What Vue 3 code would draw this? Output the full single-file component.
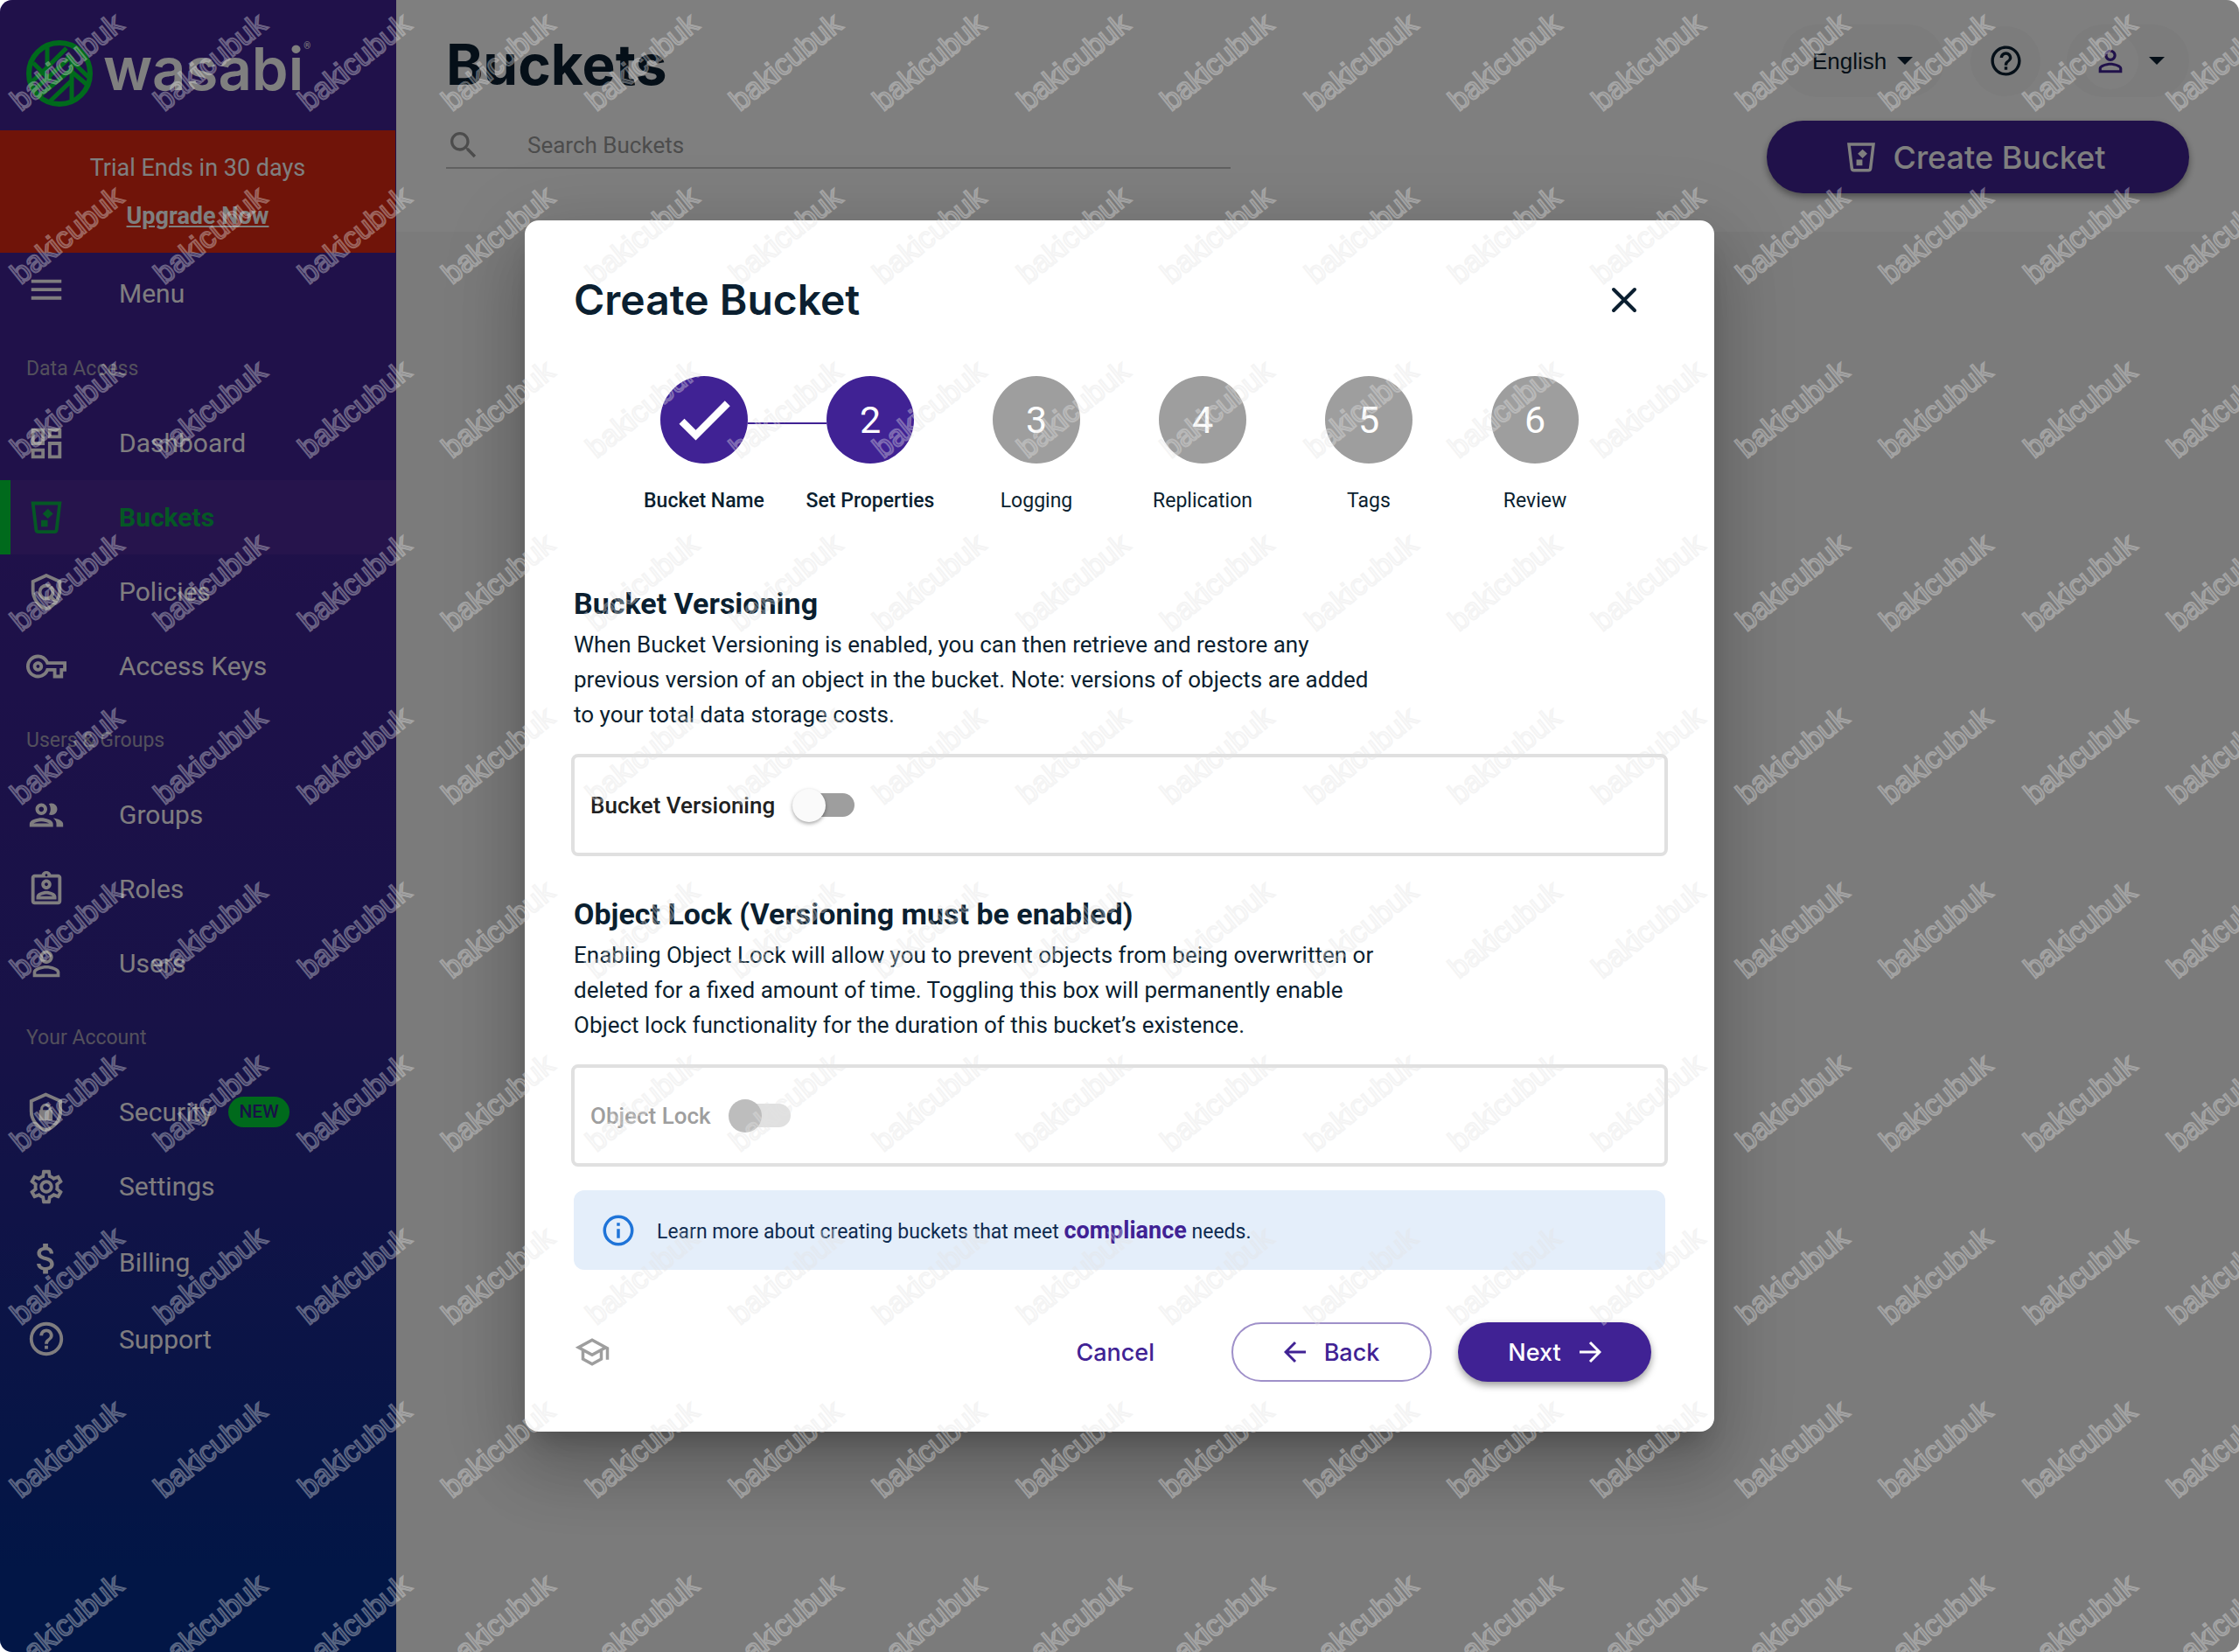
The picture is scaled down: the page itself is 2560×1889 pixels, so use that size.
<template>
  <div class="page">
    <aside class="sidebar">
      <a class="logo" href="#" aria-label="wasabi">
        <svg class="logo-mark" viewBox="0 0 76 76" fill="none" stroke="currentColor">
          <circle cx="38" cy="38" r="35" stroke-width="6" />
          <path
            d="M24 7v26M24 31L46 9M8 26l20 20M24 31l-17 16M10 56l42-38M52 20v50M46 18l25 24M52 36l20 17M52 46L27 70M52 33L16 63"
            stroke-width="5"
          />
        </svg>
        <span class="logo-text">wasabi</span>
        <span class="logo-reg">®</span>
      </a>

      <div class="trial">
        <span>Trial Ends in 30 days</span>
        <a href="#">Upgrade Now</a>
      </div>

      <nav>
        <template v-for="item in menu" :key="item.label">
          <h2 v-if="item.heading" class="nav-heading">{{ item.label }}</h2>
          <a v-else href="#" class="nav-item" :class="{ active: item.active, tall: item.tall }">
            <svg class="nav-icon" :viewBox="item.raised ? '0 2 24 24' : '0 0 24 24'">
              <path v-if="item.icon" :d="icons[item.icon]" />
              <path v-if="item.line" class="line" :d="lines[item.line]" />
            </svg>
            <span>{{ item.label }}</span>
            <span v-if="item.badge" class="badge">{{ item.badge }}</span>
          </a>
        </template>
      </nav>
    </aside>

    <main class="content">
      <header class="header">
        <div class="header-left">
          <h1>Buckets</h1>
          <label class="search">
            <svg viewBox="0 0 24 24"><path :d="icons.search" /></svg>
            <input type="text" placeholder="Search Buckets" aria-label="Search Buckets" />
          </label>
        </div>
        <div class="header-right">
          <div class="tools">
            <label class="language">
              <select v-model="language" aria-label="Language">
                <option>English</option>
              </select>
              <svg class="caret" viewBox="0 0 18 9"><path d="M0 0h18L9 9z" /></svg>
            </label>
            <button class="help" aria-label="Help">
              <svg viewBox="0 0 24 24"><path :d="icons.help" /></svg>
            </button>
            <button class="user" aria-label="Account">
              <span class="avatar">
                <svg viewBox="0 0 24 24"><path :d="icons.user" /></svg>
              </span>
              <svg class="caret" viewBox="0 0 18 9"><path d="M0 0h18L9 9z" /></svg>
            </button>
          </div>
          <button class="create">
            <svg viewBox="0 0 24 24">
              <path :d="icons.bucket" />
              <path class="line" :d="lines.bucket" />
            </svg>
            Create Bucket
          </button>
        </div>
      </header>
    </main>

    <div class="backdrop">
      <section class="modal" role="dialog" aria-labelledby="modal-title">
        <div class="modal-header">
          <h2 id="modal-title">Create Bucket</h2>
          <button class="close" aria-label="Close">
            <svg viewBox="0 0 30 30"><path d="M3 3l24 24M27 3L3 27" /></svg>
          </button>
        </div>

        <ol class="steps">
          <li v-for="(step, i) in steps" :key="step" :class="{ reached: i < 2, done: i < 1 }">
            <span class="circle">
              <svg v-if="i < 1" viewBox="0 0 24 24"><path :d="icons.check" /></svg>
              <template v-else>{{ i + 1 }}</template>
            </span>
            <span class="step-label">{{ step }}</span>
          </li>
        </ol>

        <div class="option">
          <h3>Bucket Versioning</h3>
          <p>
            When Bucket Versioning is enabled, you can then retrieve and restore any previous version
            of an object in the bucket. Note: versions of objects are added to your total data
            storage costs.
          </p>
          <div class="option-box">
            <label for="versioning">Bucket Versioning</label>
            <input id="versioning" v-model="versioning" type="checkbox" />
          </div>
        </div>

        <div class="option">
          <h3>Object Lock (Versioning must be enabled)</h3>
          <p>
            Enabling Object Lock will allow you to prevent objects from being overwritten or deleted
            for a fixed amount of time. Toggling this box will permanently enable Object lock
            functionality for the duration of this bucket’s existence.
          </p>
          <div class="option-box disabled">
            <label for="lock">Object Lock</label>
            <input id="lock" v-model="objectLock" type="checkbox" :disabled="!versioning" />
          </div>
        </div>

        <div class="info">
          <svg viewBox="0 0 24 24"><path :d="icons.info" /></svg>
          <span>
            Learn more about creating buckets that meet <a href="#">compliance</a> needs.
          </span>
        </div>

        <div class="modal-footer">
          <svg class="school" viewBox="0 0 24 24"><path :d="icons.school" /></svg>
          <button class="cancel">Cancel</button>
          <button class="back">
            <svg viewBox="0 0 26 26"><path d="M25 13H2M13 2L2 13l11 11" /></svg>
            Back
          </button>
          <button class="next">
            Next
            <svg viewBox="0 0 26 26"><path d="M1 13h23M13 2l11 11-11 11" /></svg>
          </button>
        </div>
      </section>
    </div>

    <svg class="watermark" aria-hidden="true">
      <text v-for="(m, i) in marks" :key="i" :transform="`translate(${m.x} ${m.y}) rotate(-39)`">
        bakicubuk
      </text>
    </svg>
  </div>
</template>

<script setup>
import { ref } from 'vue'

const language = ref('English')
const versioning = ref(false)
const objectLock = ref(false)

const steps = ['Bucket Name', 'Set Properties', 'Logging', 'Replication', 'Tags', 'Review']

const menu = [
  { label: 'Menu', icon: 'menu', tall: true, raised: true },
  { label: 'Data Access', heading: true },
  { label: 'Dashboard', icon: 'dashboard' },
  { label: 'Buckets', icon: 'bucket', line: 'bucket', active: true },
  { label: 'Policies', line: 'policy' },
  { label: 'Access Keys', icon: 'key' },
  { label: 'Users & Groups', heading: true },
  { label: 'Groups', icon: 'groups' },
  { label: 'Roles', icon: 'roles' },
  { label: 'Users', icon: 'user' },
  { label: 'Your Account', heading: true },
  { label: 'Security', icon: 'lock', line: 'shield', badge: 'NEW' },
  { label: 'Settings', icon: 'settings' },
  { label: 'Billing', icon: 'money', tall: true, raised: true },
  { label: 'Support', icon: 'help', tall: true }
]

// stroked shapes
const lines = {
  bucket: 'M4 3.4h16l-1.9 15.7a1.4 1.4 0 0 1-1.4 1.3H7.3a1.4 1.4 0 0 1-1.4-1.3z',
  policy:
    'M12 2.1L4 5.7V11c0 5 3.4 9.6 8 10.9 4.6-1.3 8-5.9 8-10.9V5.700z M15.900 12a3.900 3.900 0 1 1-7.800 0a3.900 3.900 0 1 1 7.800 0 M14.700 14.800l3.600 3.600',
  shield: 'M11.700 1.300L3 5.200v6c0 5.300 3.700 9.900 8.700 11.300 5-1.400 8.700-6 8.700-11.300v-6z'
}

// filled shapes
const icons = {
  menu: 'M3 18h18v-2H3v2zm0-5h18v-2H3v2zm0-7v2h18V6H3z',
  dashboard:
    'M19 5v2h-4V5h4M9 5v6H5V5h4m10 8v6h-4v-6h4M9 17v2H5v-2h4M21 3h-8v6h8V3zM11 3H3v10h8V3zm10 8h-8v10h8V11zm-10 4H3v6h8v-6z',
  bucket: 'M12.900 6.700l3.100 2.900-3.100 2.900-3.100-2.900zM8.900 13.400h3.900v3.900H8.900z',
  key: 'M22 19h-6v-4h-2.680c-1.140 2.420-3.600 4-6.320 4-3.860 0-7-3.140-7-7s3.140-7 7-7c2.720 0 5.170 1.580 6.320 4H24v6h-2v4zm-4-2h2v-4h2v-2H11.940l-.23-.67C11.010 8.340 9.110 7 7 7c-2.760 0-5 2.240-5 5s2.240 5 5 5c2.110 0 4.010-1.340 4.710-3.330l.23-.67H18v4zM7 15c-1.650 0-3-1.350-3-3s1.350-3 3-3 3 1.350 3 3-1.350 3-3 3zm0-4c-.55 0-1 .45-1 1s.45 1 1 1 1-.45 1-1-.45-1-1-1z',
  groups:
    'M9 13.750c-2.340 0-7 1.170-7 3.500V19h14v-1.750c0-2.330-4.660-3.500-7-3.500zM4.340 17c.84-.58 2.870-1.250 4.660-1.250s3.820.67 4.660 1.250H4.340zM9 12c1.930 0 3.500-1.570 3.500-3.500S10.930 5 9 5 5.500 6.570 5.500 8.500 7.070 12 9 12zm0-5c.83 0 1.500.67 1.500 1.500S9.830 10 9 10s-1.500-.67-1.500-1.500S8.170 7 9 7zm7.040 6.810c1.160.84 1.960 1.960 1.960 3.440V19h4v-1.750c0-2.020-3.500-3.170-5.960-3.440zM15 12c1.930 0 3.500-1.570 3.500-3.500S16.930 5 15 5c-.54 0-1.040.13-1.500.35.63.89 1 1.980 1 3.150s-.37 2.260-1 3.150c.46.22.96.35 1.500.35z',
  roles:
    'M19 3h-4.180C14.400 1.840 13.300 1 12 1s-2.400.84-2.820 2H5c-1.100 0-2 .9-2 2v14c0 1.100.9 2 2 2h14c1.100 0 2-.9 2-2V5c0-1.100-.9-2-2-2zm-7-.25c.41 0 .75.34.75.75s-.34.75-.75.75-.75-.34-.75-.75.34-.75.75-.75zM19 19H5V5h14v14zM12 6c-1.650 0-3 1.350-3 3s1.350 3 3 3 3-1.350 3-3-1.350-3-3-3zm0 4c-.55 0-1-.45-1-1s.45-1 1-1 1 .45 1 1-.45 1-1 1zm-6 6.470V18h12v-1.530c0-2.500-3.970-3.580-6-3.580s-6 1.070-6 3.580zM8.310 16c.69-.56 2.380-1.120 3.690-1.120s3.010.56 3.690 1.120H8.310z',
  user: 'M12 5.900c1.160 0 2.100.94 2.100 2.100s-.94 2.100-2.100 2.100S9.900 9.160 9.900 8s.94-2.100 2.100-2.100m0 9c2.970 0 6.100 1.460 6.100 2.100v1.100H5.900V17c0-.64 3.130-2.100 6.100-2.100M12 4C9.790 4 8 5.790 8 8s1.790 4 4 4 4-1.790 4-4-1.790-4-4-4zm0 9c-2.670 0-8 1.340-8 4v3h16v-3c0-2.660-5.330-4-8-4z',
  lock: 'M15 10.500V10a3.300 3.300 0 0 0-6.600 0v.5H7.700v6.300h8v-6.300zm-5-.5a1.700 1.700 0 0 1 3.400 0v.5H10z',
  settings:
    'M19.430 12.980c.04-.32.07-.64.07-.98 0-.34-.03-.66-.07-.98l2.110-1.650c.19-.15.24-.42.12-.64l-2-3.460c-.09-.16-.26-.25-.44-.25-.06 0-.12.01-.17.03l-2.490 1c-.52-.4-1.080-.73-1.690-.98l-.38-2.650C14.460 2.180 14.250 2 14 2h-4c-.25 0-.46.18-.49.42l-.38 2.650c-.61.25-1.170.59-1.690.98l-2.490-1c-.06-.02-.12-.03-.18-.03-.17 0-.34.09-.43.25l-2 3.460c-.13.22-.07.49.12.64l2.110 1.650c-.04.32-.07.65-.07.98 0 .33.03.66.07.98l-2.110 1.650c-.19.15-.24.42-.12.64l2 3.460c.09.16.26.25.44.25.06 0 .12-.01.17-.03l2.490-1c.52.4 1.080.73 1.690.98l.38 2.650c.03.24.24.42.49.42h4c.25 0 .46-.18.49-.42l.38-2.650c.61-.25 1.170-.59 1.690-.98l2.490 1c.06.02.12.03.18.03.17 0 .34-.09.43-.25l2-3.460c.12-.22.07-.49-.12-.64l-2.110-1.650zm-1.980-1.710c.04.31.05.52.05.73 0 .21-.02.43-.05.73l-.14 1.130.89.7 1.080.84-.7 1.210-1.270-.51-1.040-.42-.9.68c-.43.32-.84.56-1.250.73l-1.060.43-.16 1.130-.2 1.350h-1.400l-.19-1.350-.16-1.130-1.060-.43c-.43-.18-.83-.41-1.230-.71l-.91-.7-1.060.43-1.270.51-.7-1.210 1.080-.84.89-.7-.14-1.130c-.03-.31-.05-.54-.05-.74s.02-.43.05-.73l.14-1.130-.89-.7-1.080-.84.7-1.210 1.270.51 1.040.42.9-.68c.43-.32.84-.56 1.250-.73l1.060-.43.16-1.130.2-1.350h1.390l.19 1.350.16 1.130 1.060.43c.43.18.83.41 1.230.71l.91.7 1.060-.43 1.270-.51.7 1.210-1.070.85-.89.7.14 1.130zM12 8c-2.210 0-4 1.790-4 4s1.790 4 4 4 4-1.790 4-4-1.790-4-4-4zm0 6c-1.100 0-2-.9-2-2s.9-2 2-2 2 .9 2 2-.9 2-2 2z',
  money:
    'M11.800 10.900c-2.270-.59-3-1.200-3-2.150 0-1.090 1.010-1.850 2.700-1.850 1.780 0 2.440.85 2.500 2.100h2.210c-.07-1.720-1.120-3.300-3.210-3.810V3h-3v2.160c-1.940.42-3.500 1.680-3.500 3.610 0 2.310 1.910 3.460 4.700 4.130 2.500.6 3 1.480 3 2.410 0 .69-.49 1.790-2.700 1.790-2.060 0-2.870-.92-2.980-2.100h-2.200c.12 2.190 1.760 3.420 3.680 3.830V21h3v-2.150c1.950-.37 3.500-1.500 3.500-3.550 0-2.840-2.430-3.810-4.700-4.400z',
  help: 'M11 18h2v-2h-2v2zm1-16C6.480 2 2 6.480 2 12s4.480 10 10 10 10-4.480 10-10S17.520 2 12 2zm0 18c-4.410 0-8-3.590-8-8s3.590-8 8-8 8 3.590 8 8-3.590 8-8 8zm0-14c-2.210 0-4 1.790-4 4h2c0-1.100.9-2 2-2s2 .9 2 2c0 2-3 1.750-3 5h2c0-2.250 3-2.500 3-5 0-2.210-1.790-4-4-4z',
  search:
    'M15.500 14h-.79l-.28-.27C15.410 12.590 16 11.110 16 9.500 16 5.910 13.090 3 9.500 3S3 5.910 3 9.500 5.910 16 9.500 16c1.610 0 3.090-.59 4.230-1.570l.27.28v.79l5 4.990L20.490 19l-4.990-5zm-6 0C7.010 14 5 11.990 5 9.500S7.010 5 9.500 5 14 7.010 14 9.500 11.990 14 9.500 14z',
  check: 'M9 15.700L4.900 11.600l-1.900 1.900L9 19.400 21.400 7l-1.900-1.900z',
  info: 'M11 9h2V7h-2M12 20c-4.410 0-8-3.590-8-8s3.590-8 8-8 8 3.590 8 8-3.590 8-8 8m0-18A10 10 0 0 0 2 12a10 10 0 0 0 10 10 10 10 0 0 0 10-10A10 10 0 0 0 12 2m-1 15h2v-6h-2v6z',
  school:
    'M12 3L1 9l4 2.180v6L12 21l7-3.820v-6l2-1.090V17h2V9L12 3zm6.820 6L12 12.720 5.180 9 12 5.280 18.820 9zM17 15.990l-5 2.730-5-2.730v-3.720L12 15l5-2.730v3.720z'
}

// diagonal marks repeated over the whole page
const marks = []
for (let row = 0; row < 10; row++) {
  for (let col = 0; col < 16; col++) {
    marks.push({ x: Math.round(24 + col * 164.4), y: Math.round(128 + row * 198.3) })
  }
}
</script>

<style>
html,
body {
  margin: 0;
  background: #ffffff;
}
</style>

<style scoped>
* {
  box-sizing: border-box;
}

.page {
  position: relative;
  display: flex;
  min-height: 100vh;
  overflow: hidden;
  border-radius: 14px;
  font-family: Roboto, 'Liberation Sans', sans-serif;
  color: #0b1f30;
}

h1,
h2,
h3,
p,
ol {
  margin: 0;
  padding: 0;
}

button {
  border: none;
  background: none;
  padding: 0;
  font-family: Inter, sans-serif;
  cursor: pointer;
}

svg {
  flex: none;
  fill: currentColor;
}

.line {
  fill: none;
  stroke: currentColor;
  stroke-width: 2;
}

/* sidebar */
.sidebar {
  flex: none;
  width: 453px;
  color: #ffffff;
  background: linear-gradient(#402294 0%, #402294 30%, #30248f 62%, #042c8c 95%);
}

.logo {
  display: flex;
  align-items: center;
  height: 149px;
  padding: 18px 0 0 30px;
  color: #ffffff;
  text-decoration: none;
}

.logo-mark {
  width: 76px;
  height: 76px;
  fill: none;
  color: #00d438;
}

.logo-text {
  margin: -10px 0 0 12px;
  font-family: Inter, sans-serif;
  font-size: 67px;
  font-weight: 600;
  line-height: 76px;
}

.logo-reg {
  align-self: flex-start;
  margin-top: 29px;
  font-size: 10px;
}

.trial {
  display: flex;
  flex-direction: column;
  align-items: center;
  gap: 15px;
  height: 140px;
  margin-right: 1px;
  padding-top: 23px;
  background: #e02812;
  font-size: 27px;
  line-height: 40px;
}

.trial a {
  color: inherit;
  font-weight: 700;
}

nav {
  padding-top: 2px;
}

.nav-heading {
  height: 85px;
  padding-left: 30px;
  font-size: 23px;
  font-weight: 400;
  line-height: 85px;
  color: #a6a1b8;
}

.nav-item {
  display: flex;
  align-items: center;
  height: 85px;
  padding-left: 30px;
  color: #fffaff;
  font-size: 30px;
  text-decoration: none;
}

.nav-item.tall {
  height: 88px;
}

.nav-item.active {
  padding-left: 18px;
  border-left: 12px solid #00d438;
  background: #4c2898;
  color: #0bb04a;
  font-weight: 700;
}

.nav-icon {
  width: 46px;
  height: 46px;
  margin-right: 60px;
}

.badge {
  margin-left: 18px;
  padding: 0 12px;
  border-radius: 18px;
  background: #00d438;
  color: #30248f;
  font-size: 21px;
  font-weight: 500;
  line-height: 35px;
}

/* main */
.content {
  flex: 1;
  background: #f6f6f6;
}

.header {
  display: flex;
  justify-content: space-between;
  height: 265px;
  padding: 28px 57px 0;
  background: #ffffff;
}

.header-left {
  flex: none;
  width: 45%;
}

.header h1 {
  font-family: Inter, sans-serif;
  font-size: 64px;
  font-weight: 700;
  line-height: 92px;
}

.search {
  display: flex;
  align-items: center;
  height: 73px;
  padding-top: 20px;
  border-bottom: 2px solid #c0c0c0;
  color: #999999;
}

.search svg {
  width: 40px;
  height: 40px;
}

.search input {
  flex: 1;
  margin-left: 53px;
  padding: 0;
  border: none;
  outline: none;
  background: none;
  font-family: inherit;
  font-size: 26px;
}

.search input::placeholder {
  color: #999999;
}

.header-right {
  display: flex;
  flex-direction: column;
  align-items: flex-end;
  gap: 27px;
}

.tools {
  display: flex;
  align-items: center;
  gap: 30px;
}

.language,
.help,
.user {
  display: flex;
  align-items: center;
  border-radius: 42px;
  background: #f8f8f8;
  color: #0b1f30;
}

.language {
  height: 83px;
  padding: 0 36px;
  gap: 11px;
}

.language select {
  appearance: none;
  border: none;
  padding: 0;
  background: none;
  color: inherit;
  font-family: 'Liberation Sans', Arial, sans-serif;
  font-size: 26px;
}

.caret {
  width: 18px;
  height: 9px;
}

.help {
  justify-content: center;
  width: 80px;
  height: 80px;
}

.help svg {
  width: 41px;
  height: 41px;
}

.user {
  height: 83px;
  gap: 12px;
  padding: 0 28px 0 18px;
}

.avatar {
  display: flex;
  align-items: center;
  justify-content: center;
  width: 64px;
  height: 64px;
  border-radius: 50%;
  background: #ffffff;
  color: #402294;
}

.avatar svg {
  width: 40px;
  height: 40px;
}

.create {
  display: flex;
  align-items: center;
  justify-content: center;
  gap: 15px;
  width: 483px;
  height: 83px;
  padding-right: 8px;
  border-radius: 42px;
  background: #402294;
  color: #ffffff;
  font-size: 36px;
  font-weight: 500;
  box-shadow: 0 4px 8px rgba(0, 0, 0, 0.4);
}

.create svg {
  width: 42px;
  height: 42px;
}

/* dialog */
.backdrop {
  position: absolute;
  inset: 0;
  display: flex;
  align-items: center;
  justify-content: center;
  background: rgba(0, 0, 0, 0.5);
}

.modal {
  width: 100%;
  max-width: 1360px;
  padding: 63px 56px 57px;
  border-radius: 16px;
  background: #ffffff;
  box-shadow:
    0 21px 28px -13px rgba(0, 0, 0, 0.2),
    0 46px 72px 6px rgba(0, 0, 0, 0.14),
    0 17px 87px 15px rgba(0, 0, 0, 0.12);
}

.modal-header {
  display: flex;
  align-items: center;
  justify-content: space-between;
  padding-right: 32px;
}

.modal-header h2 {
  font-family: Inter, sans-serif;
  font-size: 48px;
  font-weight: 600;
  line-height: 56px;
}

.close {
  display: flex;
  color: #0b1f30;
}

.close svg {
  width: 30px;
  height: 30px;
  stroke: currentColor;
  stroke-width: 4;
  stroke-linecap: round;
}

.steps {
  display: flex;
  justify-content: center;
  margin-top: 59px;
  list-style: none;
}

.steps li {
  position: relative;
  display: flex;
  flex-direction: column;
  align-items: center;
  gap: 27px;
  width: 190px;
}

.circle {
  display: flex;
  align-items: center;
  justify-content: center;
  width: 100px;
  height: 100px;
  border-radius: 50%;
  background: #9e9e9e;
  color: #ffffff;
  font-size: 43px;
  line-height: 50px;
}

.circle svg {
  width: 76px;
  height: 76px;
}

.reached .circle {
  background: #402294;
}

/* connector to the next step */
.done::after {
  content: '';
  position: absolute;
  top: 53px;
  left: calc(50% + 50px);
  width: calc(100% - 100px);
  height: 2px;
  background: #402294;
}

.step-label {
  font-size: 23px;
  line-height: 32px;
  white-space: nowrap;
}

.reached .step-label {
  font-weight: 500;
}

.option {
  margin-top: 46px;
}

.steps + .option {
  margin-top: 81px;
}

.option h3 {
  font-size: 34px;
  font-weight: 700;
  line-height: 40px;
}

.option p {
  max-width: 926px;
  margin-top: 7px;
  font-size: 26px;
  line-height: 40px;
}

.option-box {
  display: flex;
  align-items: center;
  gap: 26px;
  height: 117px;
  margin: 25px -3px 0;
  padding: 0 18px;
  border: 4px solid #e0e0e0;
  border-radius: 8px;
  color: #212121;
  font-size: 26px;
  font-weight: 500;
}

.option-box input {
  appearance: none;
  display: flex;
  align-items: center;
  width: 65px;
  height: 27px;
  margin: 0;
  border-radius: 14px;
  background: #9e9e9e;
}

.option-box input::before {
  content: '';
  width: 38px;
  height: 38px;
  margin-left: -6px;
  border-radius: 50%;
  background: #fafafa;
  box-shadow: 0 2px 4px rgba(0, 0, 0, 0.35);
}

.option-box input:checked {
  justify-content: flex-end;
}

.option-box.disabled {
  color: #9e9e9e;
}

.disabled input {
  background: #e0e0e0;
}

.disabled input::before {
  background: #bdbdbd;
  box-shadow: none;
}

.info {
  display: flex;
  align-items: center;
  gap: 23px;
  height: 91px;
  margin-top: 27px;
  padding-left: 30px;
  border-radius: 12px;
  background: #e4eefa;
  color: #0e2b50;
  font-size: 23px;
}

.info svg {
  width: 42px;
  height: 42px;
  color: #1f74d8;
}

.info a {
  color: #402294;
  font-size: 27px;
  font-weight: 700;
  text-decoration: none;
}

.modal-footer {
  display: flex;
  align-items: center;
  margin-top: 60px;
  padding-right: 16px;
}

.school {
  width: 42px;
  height: 42px;
  color: #9e9e9e;
}

.modal-footer button {
  display: flex;
  align-items: center;
  justify-content: center;
  gap: 20px;
  height: 68px;
  border-radius: 34px;
  color: #402294;
  font-size: 27px;
  font-weight: 500;
}

.modal-footer button svg {
  width: 26px;
  height: 26px;
  fill: none;
  stroke: currentColor;
  stroke-width: 3;
}

.modal-footer .cancel {
  margin: 0 88px 0 auto;
}

.modal-footer .back {
  width: 229px;
  border: 2px solid #9f90c9;
}

.modal-footer .next {
  width: 221px;
  margin-left: 30px;
  background: #402294;
  color: #ffffff;
  box-shadow: 0 4px 8px rgba(0, 0, 0, 0.4);
}

/* watermark */
.watermark {
  position: absolute;
  inset: 0;
  width: 100%;
  height: 100%;
  pointer-events: none;
}

.watermark text {
  fill: rgba(225, 225, 225, 0.04);
  stroke: rgba(228, 228, 228, 0.4);
  stroke-width: 2;
  font-family: 'Liberation Sans', Arial, sans-serif;
  font-size: 34px;
}
</style>
